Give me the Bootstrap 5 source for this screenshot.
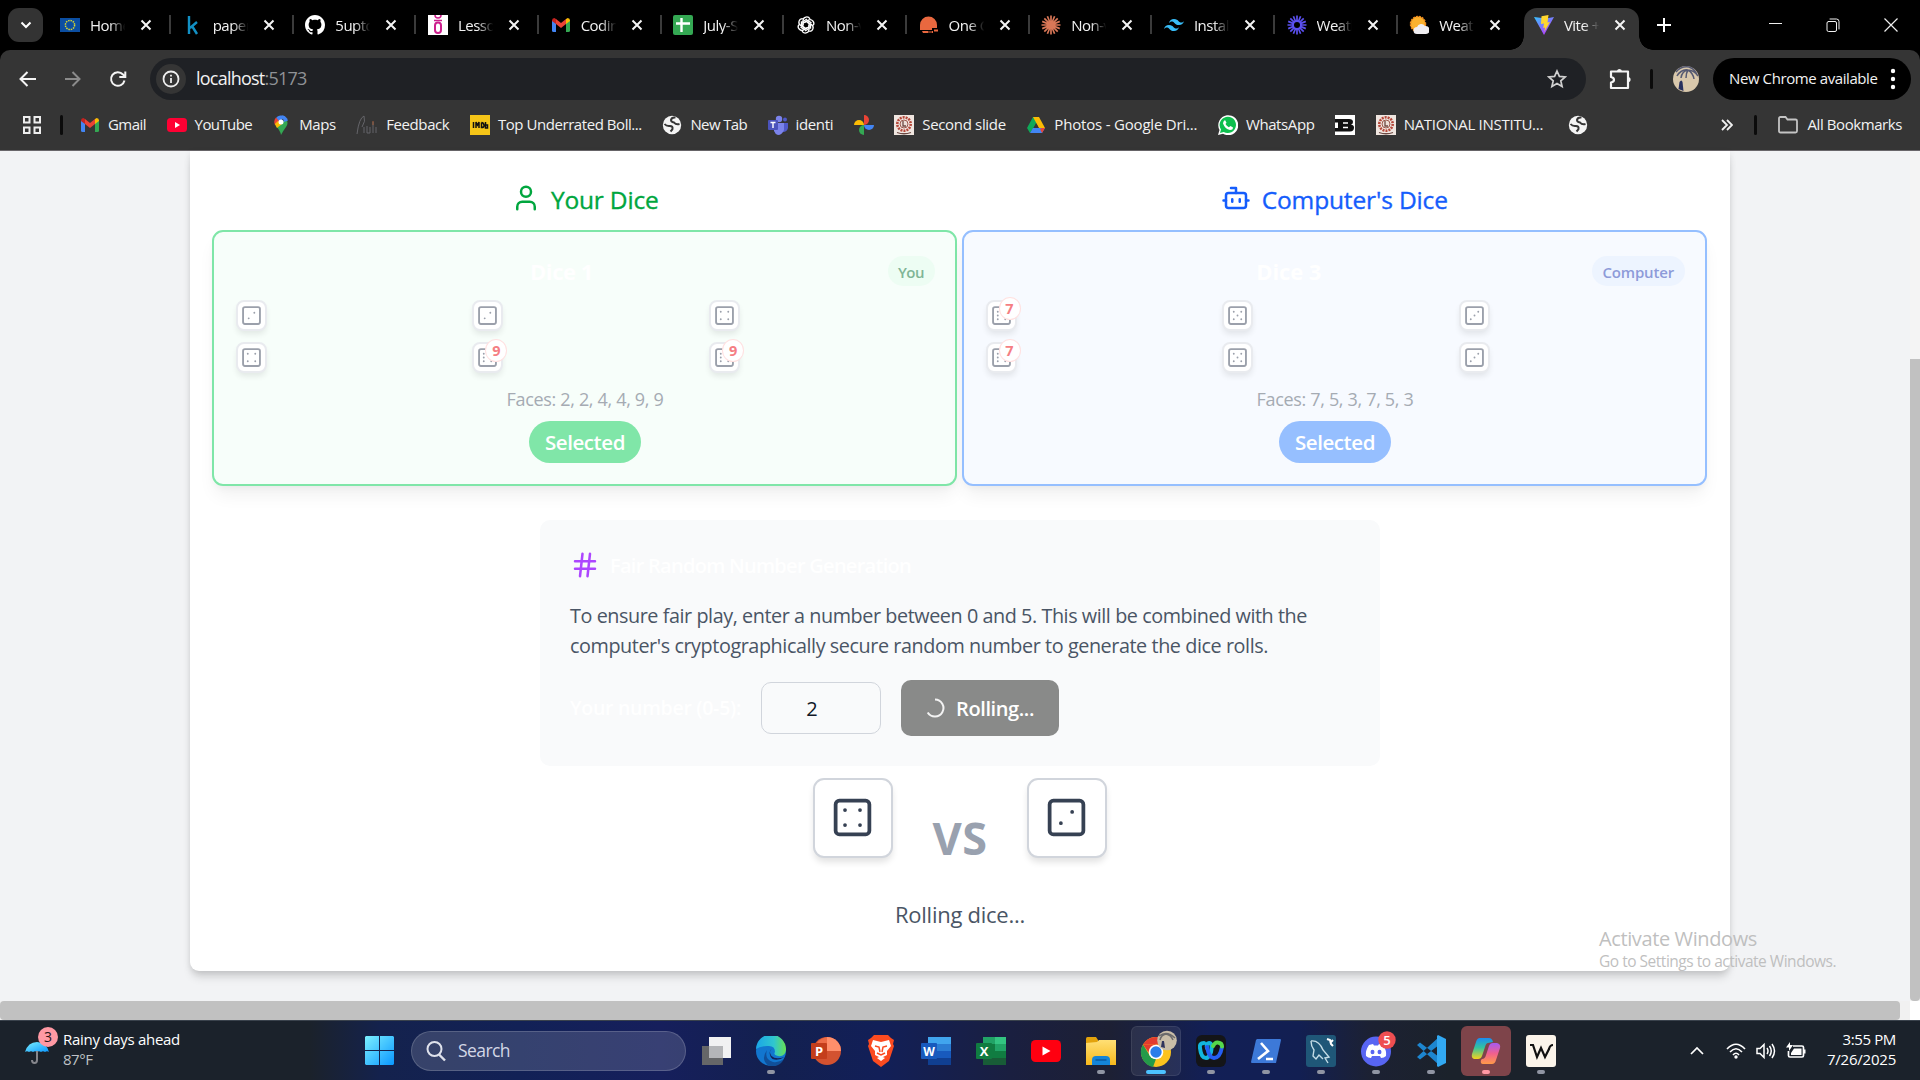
<!DOCTYPE html>
<html lang="en">
<head>
<meta charset="utf-8">
<title>Vite + React</title>
<link href="https://cdn.jsdelivr.net/npm/bootstrap@5.3.0/dist/css/bootstrap.min.css" rel="stylesheet">
<script src="https://cdn.jsdelivr.net/npm/bootstrap@5.3.0/dist/js/bootstrap.bundle.min.js"></script>
<style>
html,body{width:1920px;height:1080px;overflow:hidden}
body{font-family:"Open Sans","Noto Sans",sans-serif;background:#000;line-height:1.2}
svg{display:block;flex:none}
[data-w]{display:inline-block;white-space:nowrap}
.ln{fill:none;stroke:currentColor;stroke-linecap:round;stroke-linejoin:round}
/* tab strip */
.tabstrip{height:50px;padding-left:8px;color:#f2f2f2}
.tabmenu{width:35px;height:34px;border-radius:11px;background:#333;margin:8px 4.5px 8px 0}
.ctab{width:122.67px;height:50px;padding-left:12.5px;position:relative;font-size:15px;flex:none}
.ctab::after{content:"";position:absolute;right:-1px;top:15px;width:2px;height:19px;background:#3b3b3b}
.ctab.nosep::after{display:none}
.ttl{width:36px;margin-left:10px;overflow:hidden;white-space:nowrap;letter-spacing:-.5px;-webkit-mask-image:linear-gradient(90deg,#000 55%,transparent 98%);mask-image:linear-gradient(90deg,#000 55%,transparent 98%)}
.x{margin-left:14px}
.ctab.on{width:115px;margin:8px 0 0 4.5px;height:42px;border-radius:13px 13px 0 0;background:#353535;padding:0 0 8px 10px}
.ctab.on::after,.ctab.on::before{content:"";position:absolute;display:block;width:14px;height:14px;top:28px;background:radial-gradient(circle at 0 0,transparent 13.5px,#353535 14px)}
.ctab.on::before{left:-14px}
.ctab.on::after{right:-14px;background:radial-gradient(circle at 100% 0,transparent 13.5px,#353535 14px)}
.wc{margin-left:auto;gap:44px;padding-right:22px}
/* toolbar */
.chrome{height:101px;background:#353535;border-radius:10px 10px 0 0;border-bottom:1px solid #69666a;color:#f2f2f2}
.tools{height:57px;padding:0 9px 0 16px}
.omni{width:1436px;height:42px;border-radius:21px;background:#1f2125;padding-left:6px;font-size:18px;margin-left:22px}
.infob{width:30px;height:30px;border-radius:50%;background:#353535;margin-right:10px}
.omni>span{padding-top:1px}
.pill{width:198px;height:42px;border-radius:21px;background:#000;font-size:15px;padding-left:16px}
.pill>span{padding-bottom:2px}
.vbar{width:3px;height:20px;border-radius:2px;background:#0b0b0b}
.marks{height:36px;font-size:15px;padding-left:22px}
.marks span{padding-bottom:2px}
.bm{gap:8px;margin-right:20.6px}
/* page */
.page{height:869px;background:#f2f3f5;position:relative}
.panelcard{width:1540px;height:820px;margin-left:190px;background:#fff;border-radius:0 0 9px 9px;box-shadow:0 8px 10px -2px rgba(0,0,0,.13),0 2px 6px rgba(0,0,0,.1);padding:0 22.5px}
.duo{gap:5px;margin-left:-.5px}
.duo>div{width:745px}
.hd{height:79px;padding-top:17px;gap:10.5px;font-size:24.5px;font-weight:500}
.hd span{-webkit-text-stroke:.35px currentColor;padding-top:2px}
.green{color:#00a63e}.blue{color:#155dfc}
.dcard{height:256px;border:2px solid #7fe6a8;background:#f7fefa;border-radius:11px;padding:20px 20.5px 20px 21.5px;box-shadow:0 12px 18px -3px rgba(0,0,0,.06),0 4px 8px -3px rgba(0,0,0,.05)}
.dcard.b{border-color:#95bfff;background:#f7faff}
.dtitle{font-size:22px;font-weight:700;color:#fff}
.who{height:30px;border-radius:15px;padding:1px 10.5px 0;font-size:15px;font-weight:600;background:#edfdf3;color:#80b596}
.b .who{background:#edf4ff;color:#8d9bd9}
.dgrid{display:grid;grid-template-columns:repeat(3,236.8px);row-gap:11px;margin-top:14px}
.tile{width:31px;height:31px;background:#fff;border:2px solid #e9ebef;border-radius:8px;color:#9ba0ab;position:relative;box-shadow:0 4px 6px -1px rgba(0,0,0,.09)}
.cnt{position:absolute;left:11px;top:-5px;width:22px;height:23px;border-radius:50%;background:#fff;border:1px solid #ffe1e1;color:#f57e83;font-size:14.5px;font-weight:700;text-align:center;line-height:22px}
.faces{font-size:18px;color:#a5abb3;margin-top:14px;height:24px;line-height:24px}
.sel{width:111.5px;height:42px;border-radius:21px;background:#80e6a8;color:#fff;font-size:20.5px;font-weight:600;margin:10px auto 0}
.b .sel{background:#96bfff}
.fair{width:840px;height:246px;margin:34px auto 0;background:#f9fafb;border-radius:10px;padding:30px}
.fair h3{font-size:20px;font-weight:600;color:#fff;margin:0;padding-top:2px}
.para{font-size:19.8px;line-height:30px;color:#4a5565;margin:21px 0 19px}
.lbl{font-size:19.5px;font-weight:600;color:#fff}
.num{width:120px;height:52px;border:1px solid #d1d5dc;border-radius:10px;margin:0 20px;padding:1px 18px 0 0;font-size:20px;color:#101828}
.roll{width:158px;height:56px;background:#898a89;border-radius:10px;color:#fff;font-size:20px;font-weight:600;gap:10px}
.roll span{padding-top:1px}
.vsrow{margin-top:12px;height:80px}
.big{width:80px;height:80px;border:2px solid #d1d5dc;border-radius:11px;background:#fff;color:#364153;box-shadow:0 5px 7px -1px rgba(0,0,0,.12)}
.big svg{margin:-1px 0 0 -1px}
.versus{width:134px;text-align:center;font-size:45px;font-weight:700;color:#99a1af;line-height:50px;padding-top:35px}
.status{font-size:22px;color:#4a5565;line-height:30px;margin-top:41px}
.vs-track{position:absolute;right:0;top:0;width:10px;height:850px;background:#f4f4f4;padding-top:208px}
.vs-thumb{height:642px;background:#c1c1c1;border-radius:0 0 4px 4px}
.hs-track{position:absolute;left:0;bottom:0;width:1920px;height:19px;background:#f1f1f1}
.hs-thumb{width:1900px;height:19px;background:#c1c1c1;border-radius:4px}
.corner{width:10px;height:19px;background:#fff;margin-left:auto}
.mark-w{position:absolute;left:1599px;top:775px;color:#bfbfbf}
/* taskbar */
.task{height:60px;background:linear-gradient(90deg,#1b222b 0,#1b222b 310px,#14224d 380px,#122156 520px,#161f5c 660px,#13204f 770px,#121f58 880px,#1a1f40 1010px,#1d2034 1110px,#121f56 1210px,#121f52 1300px,#1c2133 1370px,#1b222b 1450px);border-top:1px solid #3a424c;color:#fff;padding-left:24px}
.wtext{font-size:15px;line-height:20px;padding-bottom:3px}
.srch{width:275px;height:40px;border-radius:20px;background:rgba(255,255,255,.15);border:1px solid rgba(255,255,255,.17);color:#d3d7e6;font-size:17.5px;padding-left:14px;gap:12px;margin:0 2px 0 17px}
.app{width:50px;height:50px;margin-right:5px;border-radius:6px;position:relative;border:1px solid transparent;flex:none}
.app.run::after{content:"";position:absolute;left:20px;bottom:1px;width:8px;height:4px;border-radius:2px;background:#9095a3}
.app.cur{background:rgba(255,255,255,.08);border-color:rgba(255,255,255,.08)}
.app.cur::after{left:14px;width:20px;background:#4cc2ff}
.app.hot{background:#7e444a}
.app.hot::after{background:#ff99a4}
.tray{gap:10px;margin-left:auto;padding-right:24px}
</style>
</head>
<body class="d-flex flex-column">
<svg width="0" height="0" class="position-absolute">
<defs>
<g id="box" stroke-width="2"><rect x="3" y="3" width="18" height="18" rx="2"/></g>
<symbol id="d2" viewBox="0 0 24 24"><use href="#box"/><path stroke-width="2" d="M15 9h.01M9 15h.01"/></symbol>
<symbol id="d3" viewBox="0 0 24 24"><use href="#box"/><path stroke-width="2" d="M16 8h.01M12 12h.01M8 16h.01"/></symbol>
<symbol id="d4" viewBox="0 0 24 24"><use href="#box"/><path stroke-width="2" d="M16 8h.01M8 8h.01M8 16h.01M16 16h.01"/></symbol>
<symbol id="d5" viewBox="0 0 24 24"><use href="#box"/><path stroke-width="2" d="M16 8h.01M8 8h.01M8 16h.01M16 16h.01M12 12h.01"/></symbol>
<symbol id="d6" viewBox="0 0 24 24"><use href="#box"/><path stroke-width="2" d="M16 8h.01M16 12h.01M16 16h.01M8 8h.01M8 12h.01M8 16h.01"/></symbol>
<symbol id="x" viewBox="0 0 12 12"><path d="M1.500 1.500l9 9M10.500 1.500l-9 9" stroke="#f4f4f4" stroke-width="2" fill="none"/></symbol>
<symbol id="gmail" viewBox="0 0 20 20"><path fill="#4285f4" d="M1 5l4 3v9H2.500Q1 17 1 15.500z"/><path fill="#34a853" d="M19 5l-4 3v9h2.500Q19 17 19 15.500z"/><path fill="#ea4335" d="M5 4l5 4 5-4v5l-5 4-5-4z"/><path fill="#c5221f" d="M1 5.500Q1 3 3.300 3L5 4v5L1 6z"/><path fill="#fbbc04" d="M19 5.500Q19 3 16.700 3L15 4v5l4-3z"/></symbol>
<symbol id="globe" viewBox="0 0 20 20"><circle cx="10" cy="10" r="9.200" fill="#f4f4f4"/><path d="M2.500 9q2 2.500 5.500 2 3 0 2.500 3-.5 1-2 2.500M13.500 2.500q-4-.5-4.500 2.500 0 2 3 2.500 2 2.500 5.500 1.500" fill="none" stroke="#353535" stroke-width="2"/></symbol>
<symbol id="seal" viewBox="0 0 20 20"><path fill="#f0e6e0" d="M0 0h20v20H0z"/><circle cx="10" cy="9" r="6.700" fill="none" stroke="#b5483a" stroke-width="2.600" stroke-dasharray="2 1"/><circle cx="10" cy="9" r="4" fill="#eddfd8" stroke="#9c5b50"/><path d="M9 6v5h3M3 17.500q7 2.500 14 0" stroke="#6d4a44" fill="none" stroke-width="1.300"/></symbol>
<symbol id="burst" viewBox="0 0 20 20"><g fill="none" stroke="currentColor" stroke-width="1.700"><path d="M10 .5v19M.5 10h19M3.300 3.300l13.400 13.400M16.700 3.300L3.300 16.700M6.400 1.200l7.200 17.600M13.600 1.200L6.400 18.800M1.200 6.400l17.600 7.200M18.800 6.400L1.200 13.600"/></g></symbol>
<linearGradient id="gb" x2="1" y2="1"><stop stop-color="#7cf0ff"/><stop offset="1" stop-color="#0a97ff"/></linearGradient>
<linearGradient id="gv" x2=".7" y2="1"><stop stop-color="#35c5ff"/><stop offset="1" stop-color="#bd34fe"/></linearGradient>
<linearGradient id="ge" x2="1"><stop stop-color="#1aa5e8"/><stop offset=".6" stop-color="#30c6ce"/><stop offset="1" stop-color="#68e052"/></linearGradient>
<linearGradient id="gf" x2="0" y2="1"><stop stop-color="#ffdf75"/><stop offset="1" stop-color="#f7b91c"/></linearGradient>
<linearGradient id="gc" x2="0" y2="1"><stop stop-color="#1b8cf2"/><stop offset=".45" stop-color="#33c3a0"/><stop offset="1" stop-color="#f5d21e"/></linearGradient>
<linearGradient id="gd" x2="0" y2="1"><stop stop-color="#a65af2"/><stop offset=".5" stop-color="#f0608e"/><stop offset="1" stop-color="#ff9a48"/></linearGradient>
</defs>
</svg>

<div class="tabstrip d-flex flex-none">
  <div class="tabmenu d-flex align-items-center justify-content-center"><svg width="12" height="8" viewBox="0 0 12 8"><path d="M1.500 1.500L6 6l4.500-4.500" stroke="#fff" stroke-width="2" fill="none"/></svg></div>
  <div class="ctab d-flex align-items-center"><svg width="20" height="20" viewBox="0 0 20 20"><path fill="#0b4ea2" d="M0 3h20v14H0z"/><circle cx="10" cy="10" r="4.600" fill="none" stroke="#d8d631" stroke-width="1.500" stroke-dasharray="1.500 .9"/></svg><div class="ttl">Home</div><svg class="x" width="12" height="12"><use href="#x"/></svg></div>
  <div class="ctab d-flex align-items-center"><svg width="20" height="20" viewBox="0 0 20 20"><path d="M6 1v18M14 7l-7 6M9 11l5 8" stroke="#1290c4" stroke-width="2.400" fill="none"/></svg><div class="ttl">paper</div><svg class="x" width="12" height="12"><use href="#x"/></svg></div>
  <div class="ctab d-flex align-items-center"><svg width="20" height="20" viewBox="0 0 16 16"><path fill="#fff" d="M8 0C3.580 0 0 3.580 0 8c0 3.540 2.290 6.530 5.470 7.590.4.070.55-.17.55-.38 0-.19-.01-.82-.01-1.490-2.010.37-2.530-.49-2.690-.94-.09-.23-.48-.94-.82-1.130-.28-.15-.68-.52-.01-.53.63-.01 1.080.58 1.230.82.72 1.210 1.870.87 2.330.66.070-.52.28-.87.51-1.070-1.780-.2-3.640-.89-3.640-3.950 0-.87.31-1.590.82-2.150-.08-.2-.36-1.020.08-2.120 0 0 .67-.21 2.200.82.64-.18 1.320-.27 2-.27s1.360.09 2 .27c1.530-1.040 2.200-.82 2.200-.82.44 1.100.16 1.920.08 2.120.51.56.82 1.270.82 2.150 0 3.070-1.870 3.750-3.650 3.950.29.25.54.73.54 1.480 0 1.070-.01 1.930-.01 2.200 0 .21.15.46.55.38A8.010 8.010 0 0 0 16 8c0-4.420-3.580-8-8-8z"/></svg><div class="ttl">5uptop</div><svg class="x" width="12" height="12"><use href="#x"/></svg></div>
  <div class="ctab d-flex align-items-center"><svg width="20" height="20" viewBox="0 0 20 20"><path fill="#fff" d="M0 0h20v20H0z"/><rect x="7" y="7.500" width="6" height="10.500" rx="3" fill="none" stroke="#cc1e8c" stroke-width="2"/><path d="M7 0q0 3 3 3t3-3M6 5.500h8" fill="none" stroke="#cc1e8c" stroke-width="1.500"/></svg><div class="ttl">Lesson</div><svg class="x" width="12" height="12"><use href="#x"/></svg></div>
  <div class="ctab d-flex align-items-center"><svg width="20" height="20"><use href="#gmail"/></svg><div class="ttl">Coding</div><svg class="x" width="12" height="12"><use href="#x"/></svg></div>
  <div class="ctab d-flex align-items-center"><svg width="20" height="20" viewBox="0 0 20 20"><rect width="20" height="20" rx="2" fill="#34a853"/><path d="M8.500 3v14M3 8.500h14" stroke="#fff" stroke-width="2.400"/></svg><div class="ttl">July-S</div><svg class="x" width="12" height="12"><use href="#x"/></svg></div>
  <div class="ctab d-flex align-items-center"><svg width="20" height="20" viewBox="0 0 20 20"><g fill="none" stroke="#fff" stroke-width="1.300"><g id="pet"><path d="M7 10V5.500a3.700 3.700 0 0 1 7-1.500M7 8.200l4.500-2.600 4 2.300"/></g><use href="#pet" transform="rotate(60 10 10)"/><use href="#pet" transform="rotate(120 10 10)"/><use href="#pet" transform="rotate(180 10 10)"/><use href="#pet" transform="rotate(240 10 10)"/><use href="#pet" transform="rotate(300 10 10)"/></g></svg><div class="ttl">Non-v</div><svg class="x" width="12" height="12"><use href="#x"/></svg></div>
  <div class="ctab d-flex align-items-center"><svg width="20" height="20" viewBox="0 0 20 20"><path fill="#e9683f" d="M1 15V10a8.500 8.500 0 0 1 17 0v3h-5v2zM3 16h11v2H4zM15 14.500h4v2h-4z"/><path d="M5 15.500h3M9 17h4" stroke="#000"/></svg><div class="ttl">One C</div><svg class="x" width="12" height="12"><use href="#x"/></svg></div>
  <div class="ctab d-flex align-items-center"><svg style="color:#d97757" width="20" height="20"><use href="#burst"/></svg><div class="ttl">Non-v</div><svg class="x" width="12" height="12"><use href="#x"/></svg></div>
  <div class="ctab d-flex align-items-center"><svg width="20" height="20" viewBox="0 0 24 24"><path fill="#38bdf8" d="M12 4.800c-3.200 0-5.200 1.600-6 4.800 1.200-1.600 2.600-2.200 4.200-1.800.9.230 1.570.9 2.300 1.650C13.700 10.670 15.080 12 18 12c3.200 0 5.200-1.600 6-4.800-1.200 1.600-2.600 2.200-4.200 1.800-.9-.230-1.570-.9-2.300-1.650C16.300 6.130 14.920 4.800 12 4.800zM6 12c-3.200 0-5.200 1.600-6 4.800 1.200-1.600 2.600-2.200 4.200-1.800.9.230 1.570.9 2.300 1.650C7.700 17.870 9.080 19.200 12 19.200c3.200 0 5.200-1.600 6-4.800-1.200 1.600-2.600 2.200-4.200 1.800-.9-.230-1.570-.9-2.300-1.650C10.300 13.330 8.920 12 6 12z"/></svg><div class="ttl">Install</div><svg class="x" width="12" height="12"><use href="#x"/></svg></div>
  <div class="ctab d-flex align-items-center"><svg style="color:#5b50f0" width="20" height="20" viewBox="0 0 20 20"><use href="#burst"/><circle cx="10" cy="10" r="5" fill="#5b50f0"/><circle cx="10" cy="10" r="3" fill="#000"/></svg><div class="ttl">Weath</div><svg class="x" width="12" height="12"><use href="#x"/></svg></div>
  <div class="ctab nosep d-flex align-items-center"><svg width="20" height="20" viewBox="0 0 20 20"><circle cx="9" cy="9" r="7.500" fill="#fbb12d" stroke="#f08a1d" stroke-width="1.500" stroke-dasharray="2 1"/><path fill="#f0eef2" d="M8 19a3.500 3.500 0 0 1 0-7 4.500 4.500 0 0 1 8-1 4 4 0 0 1 1 8z"/></svg><div class="ttl">Weath</div><svg class="x" width="12" height="12"><use href="#x"/></svg></div>
  <div class="ctab on d-flex align-items-center"><svg width="20" height="20" viewBox="0 0 20 20"><path fill="url(#gv)" d="M0 2l10 18L20 2l-8 1.500z"/><path fill="#ffd62e" d="M14.500 0L7.500 1.300 7 9l3-.6-.8 4.600 2-.5-1 4.500L16 7l-2.500.5z"/></svg><div class="ttl">Vite +</div><svg class="x" width="12" height="12"><use href="#x"/></svg></div>
  <svg class="align-self-center" style="margin-left:18px" width="14" height="14" viewBox="0 0 14 14"><path d="M7 0v14M0 7h14" stroke="#fff" stroke-width="2"/></svg>
  <div class="wc d-flex align-items-center">
    <svg width="13" height="14"><path d="M0 5.500h13" stroke="#eee"/></svg>
    <svg width="14" height="14" viewBox="0 0 14 14" class="ln"><rect x="1" y="3.500" width="9.500" height="10" rx="1.500"/><path d="M4 1h6.500q2.500 0 2.500 2.500V11"/></svg>
    <svg width="14" height="14"><path d="M.5.500l13 13M13.500.500l-13 13" stroke="#eee" stroke-width="1.200"/></svg>
  </div>
</div>

<div class="chrome flex-none">
  <div class="tools d-flex align-items-center">
    <svg width="22" height="22" viewBox="0 0 22 22"><path d="M20 11H5M11.500 4L4.500 11l7 7" stroke="#f4f4f4" stroke-width="2" fill="none"/></svg>
    <svg style="margin-left:23px" width="22" height="22" viewBox="0 0 22 22"><path d="M4 11h14M11.500 4l7 7-7 7" stroke="#8b8b8b" stroke-width="2" fill="none"/></svg>
    <svg style="margin-left:23px" width="22" height="22" viewBox="0 0 22 22"><path d="M18.500 12.500A6.800 6.800 0 1 1 17 6.500L19 9M19.300 3.500V9h-6" stroke="#f4f4f4" stroke-width="2" fill="none"/></svg>
    <div class="omni d-flex align-items-center">
      <div class="infob d-flex align-items-center justify-content-center"><svg width="18" height="18" viewBox="0 0 18 18"><circle cx="9" cy="9" r="7.500" fill="none" stroke="#eee" stroke-width="1.800"/><path d="M9 8v5M9 4.800v1.700" stroke="#eee" stroke-width="1.800"/></svg></div>
      <span data-w="110.500">localhost<span style="color:#8f9296">:5173</span></span>
      <svg class="ms-auto" style="margin-right:19px" width="20" height="20" viewBox="0 0 20 20"><path d="M10 2l2.400 5.400 5.800.5-4.400 3.900 1.300 5.700L10 14.500l-5.100 3 1.300-5.700L1.800 7.900l5.800-.5z" fill="none" stroke="#d0d0d0" stroke-width="1.700"/></svg>
    </div>
    <svg style="margin-left:22px" width="24" height="24" viewBox="0 0 24 24"><path d="M3 4.500h17V21H3v-5.500q3-.5 3-2.700T3 10z" fill="none" stroke="#f4f4f4" stroke-width="2.200" stroke-linejoin="round"/><path d="M9 4.500a2.500 2.500 0 0 1 5 0zM20 10a2.600 2.600 0 0 1 0 5.200z" fill="#f4f4f4"/></svg>
    <div class="vbar" style="margin-left:18px"></div>
    <svg style="margin-left:20px" width="26" height="26" viewBox="0 0 26 26"><circle cx="13" cy="13" r="13" fill="#d9c8ac"/><path d="M3 6q5-6 13-5 6 2 8 8M15 4q-7-1-11 6M15 4q-2 3-2 8M15 4q5 3 6 9M15 4Q9 5 8 12M15 4q6 0 10 6" stroke="#565a72" stroke-width="1.500" fill="none"/><path d="M5.500 23l1-7q2-3 3 0l1 9z" fill="#28305e"/></svg>
    <div class="pill d-flex align-items-center" style="margin-left:14px"><span data-w="148.500">New Chrome available</span><svg style="margin-left:12px" width="6" height="24" viewBox="0 0 6 24"><g fill="#fff"><circle cx="3" cy="4" r="2.200"/><circle cx="3" cy="12" r="2.200"/><circle cx="3" cy="20" r="2.200"/></g></svg></div>
  </div>
  <div class="marks d-flex align-items-center">
    <svg width="20" height="20" viewBox="0 0 20 20"><g fill="none" stroke="#eee" stroke-width="2"><path d="M2 2h5.500v5.500H2zM12.500 2H18v5.500h-5.500zM2 12.500h5.500V18H2zM12.500 12.500H18V18h-5.500z"/></g></svg>
    <div class="vbar" style="margin:0 17px 0 18px"></div>
    <div class="bm d-flex align-items-center"><svg width="20" height="20"><use href="#gmail"/></svg><span data-w="38">Gmail</span></div>
    <div class="bm d-flex align-items-center"><svg width="20" height="20" viewBox="0 0 20 20"><rect y="3" width="20" height="14" rx="3.500" fill="#ff0033"/><path fill="#fff" d="M8 7l5 3-5 3z"/></svg><span data-w="57.500">YouTube</span></div>
    <div class="bm d-flex align-items-center" style="margin-left:-1.500px"><svg width="20" height="20" viewBox="0 0 20 20"><path fill="#34a853" d="M10 20q-1-5-5-8.500L15 4q3 4 0 8t-5 8z"/><path fill="#4285f4" d="M5 3a7 7 0 0 1 9-1.500L8 8z"/><path fill="#ea4335" d="M5 2.500L9 7l-5 3q-2-4 1-7.500z"/><path fill="#fbbc04" d="M3.800 9L7 6l4 3-5 4z"/><path fill="#4285f4" d="M11 .5q4 0 6 5L13 7z"/><circle cx="10" cy="7" r="2.500" fill="#fff"/></svg><span data-w="36.500">Maps</span></div>
    <div class="bm d-flex align-items-center"><svg width="22" height="20" viewBox="0 0 22 20"><path d="M1 19Q3 3 8 1q2 5-2 11M8 12v6M11 11v7h3v-6M17 7v11M20 12v6" stroke="#65656a" fill="none"/><path d="M17 6v4" stroke="#a35f3c"/></svg><span data-w="63">Feedback</span></div>
    <div class="bm d-flex align-items-center"><svg width="20" height="20" viewBox="0 0 20 20"><path fill="#f5c518" d="M0 0h20v20H0z"/><path d="M3.500 7v6M6 13V7l1.500 3L9 7v6M11.500 7.500v5q3 0 2.500-2.500t-2.500-2.500M15.500 7v6h2v-3h-2" stroke="#111" stroke-width="1.500" fill="none"/></svg><span data-w="144">Top Underrated Boll...</span></div>
    <div class="bm d-flex align-items-center"><svg width="20" height="20"><use href="#globe"/></svg><span data-w="56.500">New Tab</span></div>
    <div class="bm d-flex align-items-center"><svg width="20" height="20" viewBox="0 0 20 20"><circle cx="11" cy="4" r="3.200" fill="#7b83eb"/><circle cx="17" cy="4.500" r="2" fill="#5059c9"/><path fill="#5059c9" d="M14 8h6v5q-1 4-5 4z"/><path fill="#7b83eb" d="M6 8h10v7q-2 5-6 5-3-1-4-4z"/><rect y="5" width="10" height="10" rx="1" fill="#4b53bc"/><path d="M2.500 7.500h5M5 7.500V13" stroke="#fff" stroke-width="1.400"/></svg><span data-w="37.500">identi</span></div>
    <div class="bm d-flex align-items-center"><svg width="20" height="20" viewBox="0 0 20 20"><path fill="#ea4335" d="M10 10V0a5 5 0 0 1 0 10z"/><path fill="#4285f4" d="M10 10h10a5 5 0 0 1-10 0z"/><path fill="#34a853" d="M10 10v10a5 5 0 0 1 0-10z"/><path fill="#fbbc04" d="M10 10H0a5 5 0 0 1 10 0z"/></svg></div>
    <div class="bm d-flex align-items-center"><svg width="20" height="20"><use href="#seal"/></svg><span data-w="83.500">Second slide</span></div>
    <div class="bm d-flex align-items-center"><svg width="20" height="20" viewBox="0 0 20 20"><path fill="#0fa958" d="M7 2h3l1 6-7 10-3-5z"/><path fill="#fbbc04" d="M7 2h6l6 11h-6z"/><path fill="#4285f4" d="M4 18l3-5h12l-3 5z"/><path fill="#ea4335" d="M16 13h3l-3 5-2-4z"/><path fill="#353535" d="M10 8l2.500 5H7.500z"/></svg><span data-w="143">Photos - Google Dri...</span></div>
    <div class="bm d-flex align-items-center"><svg width="20" height="20" viewBox="0 0 20 20"><path fill="#fff" d="M0 20l1.500-5A10 10 0 1 1 5 18.700z"/><path fill="#0ebf4e" d="M2 18l1-3.500A8.200 8.200 0 1 1 5.700 17z"/><path fill="#fff" d="M7 5l1.500 2.700L7.500 9q1 2 3.300 3.200L12.500 11l2.500 1.500q0 2.500-3 2.500Q7 14 5 8.500 5 6 7 5z"/></svg><span data-w="68.500">WhatsApp</span></div>
    <div class="bm d-flex align-items-center"><svg width="20" height="20" viewBox="0 0 20 20"><path fill="#fff" d="M0 0h20v20H0z"/><path d="M0 4h14q4 0 4 3 0 2-2 2.500 3 .5 3 3 0 4-4 4H0V13h3V7.500H0z" fill="#111"/><path d="M8 8h5M8 12.500h5" stroke="#fff" stroke-width="1.600"/></svg></div>
    <div class="bm d-flex align-items-center"><svg width="20" height="20"><use href="#seal"/></svg><span data-w="139.500">NATIONAL INSTITU...</span></div>
    <svg style="margin-left:4.500px" width="20" height="20"><use href="#globe"/></svg>
    <div class="d-flex align-items-center ms-auto" style="padding-right:18px">
      <svg width="12" height="12" viewBox="0 0 12 12"><path d="M1 1l5 5-5 5M6 1l5 5-5 5" stroke="#f2f2f2" stroke-width="1.800" fill="none"/></svg>
      <div class="vbar" style="margin:0 21px"></div>
      <svg width="20" height="18" viewBox="0 0 20 18" style="margin-right:10px"><path d="M1 15.500v-13Q1 1 2.500 1h5l2 2.500h8q1.500 0 1.500 1.500v10q0 1.500-1.500 1.500h-15Q1 16.500 1 15z" fill="none" stroke="#c4c4c4" stroke-width="1.800"/></svg>
      <span data-w="94.500">All Bookmarks</span>
    </div>
  </div>
</div>

<div class="page flex-none">
  <div class="panelcard">
    <div class="duo d-flex">
      <div>
        <div class="hd green d-flex align-items-center justify-content-center">
          <svg class="ln" width="30" height="30" viewBox="0 0 24 24" stroke-width="2" style="margin-top:-3px"><path d="M19 21v-2a4 4 0 0 0-4-4H9a4 4 0 0 0-4 4v2"/><circle cx="12" cy="7" r="4"/></svg><span data-w="107.500">Your Dice</span></div>
        <div class="dcard">
          <div class="d-flex align-items-center" style="padding-top:4px"><div class="dtitle flex-grow-1 text-center"><span data-w="63">Dice 1</span></div><div class="who d-flex align-items-center"><span data-w="26">You</span></div></div>
          <div class="dgrid">
            <div class="tile"><svg class="ln" width="27" height="27" viewBox="-2.400 -2.400 28.800 28.800"><use href="#d2" width="24" height="24"/></svg></div>
            <div class="tile"><svg class="ln" width="27" height="27" viewBox="-2.400 -2.400 28.800 28.800"><use href="#d2" width="24" height="24"/></svg></div>
            <div class="tile"><svg class="ln" width="27" height="27" viewBox="-2.400 -2.400 28.800 28.800"><use href="#d4" width="24" height="24"/></svg></div>
            <div class="tile"><svg class="ln" width="27" height="27" viewBox="-2.400 -2.400 28.800 28.800"><use href="#d4" width="24" height="24"/></svg></div>
            <div class="tile"><svg class="ln" width="27" height="27" viewBox="-2.400 -2.400 28.800 28.800"><use href="#d6" width="24" height="24"/></svg><span class="cnt">9</span></div>
            <div class="tile"><svg class="ln" width="27" height="27" viewBox="-2.400 -2.400 28.800 28.800"><use href="#d6" width="24" height="24"/></svg><span class="cnt">9</span></div>
          </div>
          <div class="faces text-center"><span data-w="157">Faces: 2, 2, 4, 4, 9, 9</span></div>
          <div class="sel d-flex align-items-center justify-content-center"><span data-w="80">Selected</span></div>
        </div>
      </div>
      <div>
        <div class="hd blue d-flex align-items-center justify-content-center">
          <svg class="ln" width="30" height="30" viewBox="0 0 24 24" stroke-width="2" style="margin-top:-3px"><path d="M12 8V4H8"/><rect width="16" height="12" x="4" y="8" rx="2"/><path d="M2 14h2M20 14h2M15 13v2M9 13v2"/></svg><span data-w="186">Computer's Dice</span></div>
        <div class="dcard b">
          <div class="d-flex align-items-center" style="padding-top:4px"><div class="dtitle flex-grow-1 text-center"><span data-w="65">Dice 3</span></div><div class="who d-flex align-items-center"><span data-w="71.500">Computer</span></div></div>
          <div class="dgrid">
            <div class="tile"><svg class="ln" width="27" height="27" viewBox="-2.400 -2.400 28.800 28.800"><use href="#d6" width="24" height="24"/></svg><span class="cnt">7</span></div>
            <div class="tile"><svg class="ln" width="27" height="27" viewBox="-2.400 -2.400 28.800 28.800"><use href="#d5" width="24" height="24"/></svg></div>
            <div class="tile"><svg class="ln" width="27" height="27" viewBox="-2.400 -2.400 28.800 28.800"><use href="#d3" width="24" height="24"/></svg></div>
            <div class="tile"><svg class="ln" width="27" height="27" viewBox="-2.400 -2.400 28.800 28.800"><use href="#d6" width="24" height="24"/></svg><span class="cnt">7</span></div>
            <div class="tile"><svg class="ln" width="27" height="27" viewBox="-2.400 -2.400 28.800 28.800"><use href="#d5" width="24" height="24"/></svg></div>
            <div class="tile"><svg class="ln" width="27" height="27" viewBox="-2.400 -2.400 28.800 28.800"><use href="#d3" width="24" height="24"/></svg></div>
          </div>
          <div class="faces text-center"><span data-w="157">Faces: 7, 5, 3, 7, 5, 3</span></div>
          <div class="sel d-flex align-items-center justify-content-center"><span data-w="80">Selected</span></div>
        </div>
      </div>
    </div>

    <div class="fair">
      <div class="d-flex align-items-center" style="height:30px"><svg class="ln" style="color:#ad46ff;margin-right:10px" width="30" height="30" viewBox="0 0 24 24" stroke-width="2"><path d="M4 9h16M4 15h16M10 3L8 21M16 3l-2 18"/></svg><h3><span data-w="301">Fair Random Number Generation</span></h3></div>
      <div class="para"><span data-w="737">To ensure fair play, enter a number between 0 and 5. This will be combined with the</span><br><span data-w="698">computer's cryptographically secure random number to generate the dice rolls.</span></div>
      <div class="d-flex align-items-center"><span class="lbl" data-w="171">Your number (0-5):</span>
        <div class="num d-flex align-items-center justify-content-center">2</div>
        <div class="roll d-flex align-items-center justify-content-center"><svg width="20" height="22" viewBox="0 0 20 22"><path d="M9 2.500a8.500 8.500 0 1 1-7.300 13" fill="none" stroke="#f3f3f3" stroke-width="2"/></svg><span data-w="78">Rolling...</span></div>
      </div>
    </div>

    <div class="vsrow d-flex justify-content-center">
      <div class="big d-flex justify-content-center align-items-center"><svg class="ln" width="45" height="45"><use href="#d4"/></svg></div>
      <div class="versus"><span data-w="55">VS</span></div>
      <div class="big d-flex justify-content-center align-items-center"><svg class="ln" width="45" height="45"><use href="#d2"/></svg></div>
    </div>
    <div class="status text-center"><span data-w="130">Rolling dice...</span></div>
  </div>
  <div class="mark-w"><div style="font-size:20px;line-height:26px"><span data-w="158">Activate Windows</span></div><div style="font-size:15.500px;line-height:19px"><span data-w="237">Go to Settings to activate Windows.</span></div></div>
  <div class="vs-track"><div class="vs-thumb"></div></div>
  <div class="hs-track d-flex"><div class="hs-thumb"></div><div class="corner"></div></div>
</div>

<div class="task d-flex align-items-center flex-none">
  <svg width="36" height="44" viewBox="0 0 36 44" style="margin-top:-3px"><path fill="url(#gb)" d="M1 25Q4 15 13 15t12 10q-2-1.500-4 0-2-1.500-4 0-2-1.500-4 0-2-1.500-4 0-2-1.500-4 0-2-1.500-4 0z"/><path d="M13 24v9q0 3-2.500 3T8 33" stroke="#85868c" stroke-width="2" fill="none"/><circle cx="24" cy="10" r="10" fill="#ff99a4"/><text x="24" y="15" font-size="14" text-anchor="middle" fill="#2a1518">3</text></svg>
  <div class="wtext" style="margin-left:3px"><div><span data-w="117">Rainy days ahead</span></div><div style="color:#bfc2c6"><span data-w="29.500">87°F</span></div></div>
  <svg style="margin-left:185px" width="29" height="29" viewBox="0 0 29 29"><path fill="url(#gb)" d="M1 0h13v14H0V1zM15 0h13l1 1v13H15zM0 15h14v14H1l-1-1zM15 15h14v13l-1 1H15z"/></svg>
  <div class="srch d-flex align-items-center"><svg width="20" height="22" viewBox="0 0 20 22"><circle cx="8.500" cy="9" r="7" fill="none" stroke="#dfe2ec" stroke-width="2"/><path d="M13 14.500l6 6" stroke="#dfe2ec" stroke-width="2.400"/></svg><span data-w="52">Search</span></div>
  <div class="d-flex" style="margin-left:3px">
    <div class="app d-flex align-items-center justify-content-center"><svg width="30" height="30" viewBox="0 0 30 30"><path fill="#656668" d="M1 10h21v19H1z"/><path fill="#f1f1f2" d="M8 1h22v21H8z"/><path fill="#b4b5b8" d="M8 10h14v12H8z"/></svg></div>
    <div class="app run d-flex align-items-center justify-content-center"><svg width="30" height="30" viewBox="0 0 30 30"><circle cx="15" cy="15" r="15" fill="#1276cf"/><path fill="url(#ge)" d="M0 13A15 15 0 0 1 30 14q-1 7-8 6-5-1-3-4 0-7-8-6Q4 10 0 13z"/><path fill="#104f99" d="M11 14q-3 9 6 12 6 1 11-3-5 9-15 7-9-6-2-16z"/><path fill="#141f56" d="M15.500 13q-3 3 0 7 4 4 13 1-6 4-12 2-5-5-1-10z"/></svg></div>
    <div class="app d-flex align-items-center justify-content-center"><svg width="30" height="30" viewBox="0 0 30 30"><circle cx="16" cy="15" r="14" fill="#d35230"/><path fill="#ff8f6b" d="M16 1a14 14 0 0 1 14 14H16z"/><path fill="#ed6c47" d="M16 1v14H4Q4 3 16 1z"/><rect y="7" width="16" height="16" rx="1" fill="#c43e1c"/><text x="8" y="20" font-size="13" font-weight="700" text-anchor="middle" fill="#fff">P</text></svg></div>
    <div class="app d-flex align-items-center justify-content-center"><svg width="28" height="32" viewBox="0 0 28 32"><path fill="#fb4b20" d="M7 0h14l3 3 3 2-1 4 1 2-5 15-8 6-8-6L1 11l1-2-1-4 3-2z"/><path fill="#fff" d="M6 5l8 2 8-2 2 6-4 5v4l-6 3-6-3v-4l-4-5zM10 23l4-2 4 2-4 3z"/><path d="M8 11l4 1 1 5M20 11l-4 1-1 5M10 18l4 2 4-2" stroke="#fb4b20" stroke-width="1.500" fill="none"/></svg></div>
    <div class="app d-flex align-items-center justify-content-center"><svg width="30" height="30" viewBox="0 0 30 30"><path fill="#41a5ee" d="M7 1h23v7H7z"/><path fill="#2b7cd3" d="M7 8h23v7H7z"/><path fill="#185abd" d="M7 15h23v7H7z"/><path fill="#103f91" d="M7 22h23v7H7z"/><rect y="7" width="16" height="16" rx="1" fill="#185abd"/><text x="8" y="19.500" font-size="12" font-weight="700" text-anchor="middle" fill="#fff">W</text></svg></div>
    <div class="app d-flex align-items-center justify-content-center"><svg width="30" height="30" viewBox="0 0 30 30"><path fill="#21a366" d="M7 1h12v7H7zM7 8h12v7H7z"/><path fill="#33c481" d="M19 1h11v7H19z"/><path fill="#21a366" d="M19 8h11v7H19z"/><path fill="#107c41" d="M7 8h12v14H7zM19 15h11v7H19z"/><path fill="#185c37" d="M7 22h23v7H7z"/><rect y="7" width="16" height="16" rx="1" fill="#107c41"/><text x="8" y="20" font-size="13" font-weight="700" text-anchor="middle" fill="#fff">X</text></svg></div>
    <div class="app d-flex align-items-center justify-content-center"><svg width="30" height="30" viewBox="0 0 30 30"><rect y="4" width="30" height="22" rx="4.500" fill="#ff0010"/><path fill="#fff" d="M11.500 10.500l8 4.500-8 4.500z"/></svg></div>
    <div class="app run d-flex align-items-center justify-content-center"><svg width="30" height="30" viewBox="0 0 30 30"><path fill="#e3a30c" d="M0 2.500Q0 1 1.500 1H10l2 3v5H0z"/><path fill="url(#gf)" d="M0 7l11-1 2-2h17v25H0z"/><path fill="#1484d8" d="M6 29v-5q0-4 4-4h10q4 0 4 4v5z"/><path d="M9.500 24h11" stroke="#0a5aa0" stroke-width="1.500"/></svg></div>
    <div class="app run cur d-flex align-items-center justify-content-center"><svg width="42" height="42" viewBox="-2 0 42 42"><circle cx="19" cy="22" r="15" fill="#fcc31e"/><path fill="#e33b2e" d="M6 14.500A15 15 0 0 1 32 14.500H19z"/><path fill="#249a4a" d="M6 14.500L13 26l6 3-3 8A15 15 0 0 1 6 14.500z"/><path fill="#e33b2e" d="M6 14.500l7 10 6-10z"/><circle cx="19" cy="22" r="7.300" fill="#fff"/><circle cx="19" cy="22" r="5.700" fill="#2a7de9"/><circle cx="30" cy="10.500" r="9.800" fill="#c9bda8"/><path d="M22 6q8-6 16 2M29 4q-5 1-6 6M29 4q5 1 7 6" stroke="#6b6a6c" stroke-width="1.500" fill="none"/><path d="M25 11h2l1 7-4-1z" fill="#30345c"/></svg></div>
    <div class="app run d-flex align-items-center justify-content-center"><svg width="30" height="32" viewBox="0 0 30 32"><rect width="30" height="32" rx="6" fill="#141518"/><g fill="none" stroke-width="4" stroke-linecap="round"><path d="M8 8q-5 0-4 5 1 10 6 10 3 0 5-6 2-9-2-9-3 0-2 5" stroke="#12b6de"/><path d="M11 12q2 11 7 11 6 0 8-11" stroke="#255ff4"/><path d="M17 11q2-4 5-3.500 4 .5 4 4" stroke="#55d84b"/></g></svg></div>
    <div class="app run d-flex align-items-center justify-content-center"><svg width="30" height="26" viewBox="0 0 30 26"><path fill="#3d79d8" d="M6 1h23q1 0 1 1l-5 23H1q-1 0-1-1L5 2z"/><path d="M10 5l7 8-10 8M15 21h7" stroke="#fff" stroke-width="2.600" fill="none"/></svg></div>
    <div class="app run d-flex align-items-center justify-content-center"><svg width="30" height="32" viewBox="0 0 30 32"><rect width="30" height="32" rx="3" fill="#1f5778"/><path d="M5 6q8-1 12 9l6 7-4 1 3 5M5 6q0 5 3 9l-1 6 3 3 3-4 4 4" stroke="#c4dce6" stroke-width="1.400" fill="none"/><path d="M21 4l3 1 1 4 2 2M27 5l-3 3" stroke="#fff" stroke-width="2" fill="none"/></svg></div>
    <div class="app run d-flex align-items-center justify-content-center"><svg width="40" height="44" viewBox="0 0 40 44"><circle cx="20" cy="22.500" r="15" fill="#5865f2"/><path fill="#fff" d="M13 16l4-1 1 1.500h4L23 15l4 1q4 6 3 11-2 2-5 2l-1-2h-8l-1 2q-3 0-5-2-1-5 3-11z"/><ellipse cx="16.500" cy="23" rx="2" ry="2.300" fill="#5865f2"/><ellipse cx="23.500" cy="23" rx="2" ry="2.300" fill="#5865f2"/><circle cx="31" cy="11" r="8.700" fill="#ee4e51"/><text x="31" y="16" font-size="13" font-weight="600" text-anchor="middle" fill="#fff">5</text></svg></div>
    <div class="app run d-flex align-items-center justify-content-center"><svg width="30" height="32" viewBox="0 0 30 32"><path fill="#1d86d0" d="M1 10l3-2.500L23 22v8zM1 22l3 2.500L23 10V2z"/><path fill="#32a9f2" d="M22 0l8 4v24l-8 4-1-1V1z"/></svg></div>
    <div class="app run hot d-flex align-items-center justify-content-center"><svg width="30" height="30" viewBox="0 0 30 30"><path fill="url(#gc)" d="M9 2h9q3 0 4 4l-5 1q-2 0-3 4l-3 9q-1 3-4 3H3q-3-1-2-5L5 6q1-4 4-4z"/><path fill="url(#gd)" d="M21 28h-9q-3 0-2-4l1-1q3 0 4-4l3-9q1-3 4-3h4q4 1 3 5l-4 12q-1 4-4 4z"/></svg></div>
    <div class="app run d-flex align-items-center justify-content-center"><svg width="30" height="32" viewBox="0 0 30 32"><rect width="30" height="32" rx="3" fill="#fbf4ea"/><path d="M4 10h3l4 12 4-9 4 9 4-8q1-4 4-4" stroke="#111" stroke-width="2.200" fill="none"/></svg></div>
  </div>
  <div class="tray d-flex align-items-center">
    <svg width="14" height="10" viewBox="0 0 14 10" style="margin-right:12px"><path d="M1 8l6-6 6 6" stroke="#fff" stroke-width="1.700" fill="none"/></svg>
    <svg width="20" height="18" viewBox="0 0 20 18"><g fill="none" stroke="#fff" stroke-width="1.600"><path d="M1 7q9-9.500 18 0M4 10q6-6.500 12 0M7 13q3-3.500 6 0"/></g><circle cx="10" cy="15" r="1.700" fill="#fff"/></svg>
    <svg width="20" height="18" viewBox="0 0 20 18"><path d="M1 6.500h3L8 2.500v13l-4-4H1zM11 6q2 3 0 6M13.500 4q3.500 5 0 10M16 2q5 7 0 14" fill="none" stroke="#fff" stroke-width="1.500"/></svg>
    <svg width="20" height="18" viewBox="0 0 20 18"><path d="M7 4h9q1.500 0 1.500 1.500v8q0 1.500-1.500 1.500H4q-1.500 0-1.500-1.500V9" fill="none" stroke="#fff" stroke-width="1.700"/><path fill="#fff" d="M8 6.500h7.500v6.500H5v-2zM18 7.500h1.500v4H18zM4 0v3H7L3 9V5.500H0z"/></svg>
    <div class="wtext text-end" style="margin-left:11px"><div><span data-w="53.500">3:55 PM</span></div><div><span data-w="69">7/26/2025</span></div></div>
  </div>
</div>
<script>
/* Track each label so that it fills its own measure. */
document.querySelectorAll('[data-w]').forEach(function (el) {
  var w = parseFloat(el.dataset.w), n = el.textContent.length;
  el.style.letterSpacing = ((w - el.getBoundingClientRect().width) / n) + 'px';
});
</script>
</body>
</html>
